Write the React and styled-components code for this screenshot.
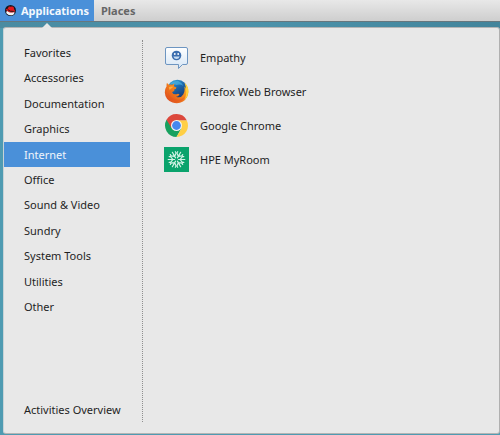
import React, { useState } from 'react';
import styled, { createGlobalStyle } from 'styled-components';

const GlobalStyle = createGlobalStyle`
  * { box-sizing: border-box; }
  body {
    margin: 0;
    background: #4f9bb2;
    font-family: "Noto Sans", "Open Sans", sans-serif;
    font-size: 11px;
    color: #1f1f1f;
  }
  button { font: inherit; color: inherit; border: 0; margin: 0; background: none; text-align: left; }
  ul { list-style: none; margin: 0; padding: 0; }
`;

const Desktop = styled.div`
  min-height: 100vh;
  display: flex;
  flex-direction: column;
  padding-bottom: 1px;
  background: linear-gradient(100deg, #4a8ba1 0, #4c93ab 50%, #42849b 100%) top / 100% 28px no-repeat, #4f9bb2;
`;

const TopBar = styled.header`
  display: flex;
  height: 22px;
  background: linear-gradient(#e8e8e8, #cecece);
  border-bottom: 1px solid #66777e;
`;

const BarButton = styled.button`
  display: flex;
  align-items: center;
  gap: 5px;
  padding: 0 ${(p) => (p.$active ? 5 : 7)}px;
  font-weight: 700;
  color: ${(p) => (p.$active ? '#f4f8fd' : '#666')};
  background: ${(p) => (p.$active ? '#4a90d9' : 'transparent')};
`;

const Menu = styled.main`
  position: relative;
  flex: 1;
  display: flex;
  margin: 5px 0 0 3px;
  padding: 12px 0 11px;
  background: #e8e8e8;
  border: 1px solid #b4b4b4;
  border-left-color: #c9d3d6;
  border-right-color: #b0b0b0;
  border-radius: 3px;
`;

const Pointer = styled.span`
  position: absolute;
  top: -5px;
  left: 38px;
  border: 5px solid transparent;
  border-top: 0;
  border-bottom-color: #e8e8e8;
`;

const Sidebar = styled.nav`
  display: flex;
  flex-direction: column;
  justify-content: space-between;
  width: 139px;
  padding-right: 12px;
  border-right: 1px dotted #8e8e8e;
`;

const Categories = styled.ul`
  display: grid;
  grid-auto-rows: 1fr;
  height: 280px;
`;

const CategoryButton = styled.button`
  display: block;
  width: 100%;
  height: 100%;
  padding: 0 20px 1px;
  white-space: nowrap;
  color: ${(p) => (p.$selected ? '#f0f5fb' : 'inherit')};
  background: ${(p) => (p.$selected ? '#4a90d9' : 'transparent')};
`;

const OverviewButton = styled(CategoryButton)`
  height: 24px;
`;

const Apps = styled.ul`
  flex: 1;
  padding-left: 21px;
`;

const AppButton = styled.button`
  display: flex;
  align-items: center;
  gap: 11px;
  width: 100%;
  height: 34px;
  padding: 0;
  svg { flex: none; }
`;

const HatIcon = () => (
  <svg width="11" height="11" viewBox="0 0 24 24" aria-hidden="true">
    <circle cx="12" cy="12" r="12" fill="#171923" />
    <path d="M5 13 Q8 14 10 16 L20 15 Q22 18 18 21 Q11 25 4 19 Q1 15 5 13Z" fill="#f4f4f4" />
    <path d="M2 10 Q3 8 6 8 L8 4 Q10 2 12 4 Q17 2 19 5 L20 10 Q24 14 19 16 Q12 18 5 13 Q2 12 2 10Z" fill="#e3171c" />
    <path d="M6 10 Q11 15 19 14" fill="none" stroke="#161616" strokeWidth="2" />
  </svg>
);

const EmpathyIcon = () => (
  <svg width="25" height="25" viewBox="0 0 25 25" aria-hidden="true">
    <defs>
      <linearGradient id="bubble" x1="0" y1="0" x2="0" y2="1">
        <stop offset="0" stopColor="#fff" />
        <stop offset="1" stopColor="#d5e5f5" />
      </linearGradient>
    </defs>
    <path d="M3 2.5H22Q23.5 2.5 23.5 4V18Q23.5 19.5 22 19.5H18.5L14.5 23.5V19.5H3Q1.5 19.5 1.5 18V4Q1.5 2.5 3 2.5Z" fill="url(#bubble)" stroke="#6d95c1" />
    <circle cx="12.5" cy="10.5" r="4.8" fill="#3c6eaf" />
    <circle cx="10.8" cy="9" r="0.9" fill="#fff" />
    <circle cx="14.2" cy="9" r="0.9" fill="#fff" />
    <path d="M9.3 11.4H15.7Q14.8 14 12.5 14Q10.2 14 9.3 11.4Z" fill="#c6dcf2" />
  </svg>
);

const FirefoxIcon = () => (
  <svg width="25" height="25" viewBox="0 0 25 25" aria-hidden="true">
    <defs>
      <linearGradient id="globe" x1="0" y1="0" x2="0.6" y2="1">
        <stop offset="0" stopColor="#3fb2e3" />
        <stop offset="0.5" stopColor="#1c66aa" />
        <stop offset="1" stopColor="#17336d" />
      </linearGradient>
      <linearGradient id="fox" x1="1" y1="0" x2="0.1" y2="0.8">
        <stop offset="0" stopColor="#ffdd3c" />
        <stop offset="0.45" stopColor="#f58a1c" />
        <stop offset="1" stopColor="#e0501e" />
      </linearGradient>
    </defs>
    <circle cx="13.4" cy="11" r="10.3" fill="url(#globe)" />
    <path d="M14 2Q18 3.5 19.5 7Q16.5 4.8 12.5 6Q9 4.4 6 5.3Q9.2 1.8 14 2Z" fill="#4ebce9" opacity=".6" />
    <path d="M3 3.8Q3.8 5.4 5.2 5.8Q6.8 5 8.4 5.8Q9.4 4.8 10.7 4.8Q9.6 6.2 10 7.5Q11.7 7.9 12.5 8.7Q12 10 10.2 10.6L10.3 12.2Q8.8 12 8.2 13.4Q9.2 15.8 12.5 15.2Q14.3 14.4 15.5 15.4Q14.2 17.6 12 17.8Q16.9 19.6 19.2 15.5Q21.4 11.5 20.3 7.6Q21.5 8.4 21.9 9.7Q21.9 6 20.6 3.9Q24.6 7.3 24.4 13Q24 19.2 19 22.6Q14 25.4 8.5 23.5Q1.2 20.6 .8 13.4Q.9 9.5 2.6 7.2Q2.3 5.4 3 3.8Z" fill="url(#fox)" />
    <path d="M4 14Q6 19 12 20.5Q17.5 21.5 21.5 17Q18.5 23.3 12 22.8Q5 21 4 14Z" fill="#e3541d" opacity=".5" />
    <path d="M20.6 3.9Q24.6 7.3 24.4 13Q23.8 18 20.5 21Q23 15 21.9 9.7Q21.9 6 20.6 3.9Z" fill="#ffcf39" />
    <path d="M4.8 8.2Q6.5 7.2 9.5 7.8Q7.6 9 5.5 11Z" fill="#ffc34d" opacity=".7" />
  </svg>
);

const ChromeIcon = () => (
  <svg width="25" height="25" viewBox="0 0 25 25" aria-hidden="true">
    <path d="M12.5 12.5 2.5 6.8A11.5 11.5 0 0 0 12.5 24L17.5 15.3Z" fill="#18a15f" />
    <path d="M12.5 7.2H22.7A11.5 11.5 0 0 1 12.5 24L17.5 15.3Z" fill="#ffcf45" />
    <path d="M2.5 6.8A11.5 11.5 0 0 1 22.7 7.2H12.5L7.6 15.3Z" fill="#dc483c" />
    <circle cx="12.5" cy="12.5" r="5.5" fill="#f3f3f3" />
    <circle cx="12.5" cy="12.5" r="4.4" fill="#4688ef" />
  </svg>
);

const branchAngles = [30, 90, 150, 210, 270, 330];

const MyRoomIcon = () => (
  <svg width="25" height="25" viewBox="0 0 25 25" aria-hidden="true">
    <path d="M0 0H25V25H0Z" fill="#0aa36c" />
    <g fill="none" stroke="#d3f3e6" strokeWidth="1.2" strokeLinecap="round">
      {branchAngles.map((angle) => (
        <g key={angle} transform={`rotate(${angle} 12.5 12.5)`}>
          <path d="M12.5 10.6V4.2M12.5 8.9 9.6 6.6V5.2M12.5 8.9 15.4 6.6V5.2" />
        </g>
      ))}
    </g>
  </svg>
);

const categories = [
  'Favorites', 'Accessories', 'Documentation', 'Graphics', 'Internet', 'Office',
  'Sound & Video', 'Sundry', 'System Tools', 'Utilities', 'Other',
];

const apps = [
  { name: 'Empathy', Icon: EmpathyIcon },
  { name: 'Firefox Web Browser', Icon: FirefoxIcon },
  { name: 'Google Chrome', Icon: ChromeIcon },
  { name: 'HPE MyRoom', Icon: MyRoomIcon },
];

export default function App() {
  const [selected, setSelected] = useState('Internet');
  return (
    <>
      <GlobalStyle />
      <Desktop>
        <TopBar>
          <BarButton $active><HatIcon />Applications</BarButton>
          <BarButton>Places</BarButton>
        </TopBar>
        <Menu>
          <Pointer />
          <Sidebar aria-label="Categories">
            <Categories>
              {categories.map((name) => (
                <li key={name}>
                  <CategoryButton $selected={name === selected} onClick={() => setSelected(name)}>
                    {name}
                  </CategoryButton>
                </li>
              ))}
            </Categories>
            <OverviewButton>Activities Overview</OverviewButton>
          </Sidebar>
          <Apps>
            {apps.map(({ name, Icon }) => (
              <li key={name}>
                <AppButton><Icon />{name}</AppButton>
              </li>
            ))}
          </Apps>
        </Menu>
      </Desktop>
    </>
  );
}
